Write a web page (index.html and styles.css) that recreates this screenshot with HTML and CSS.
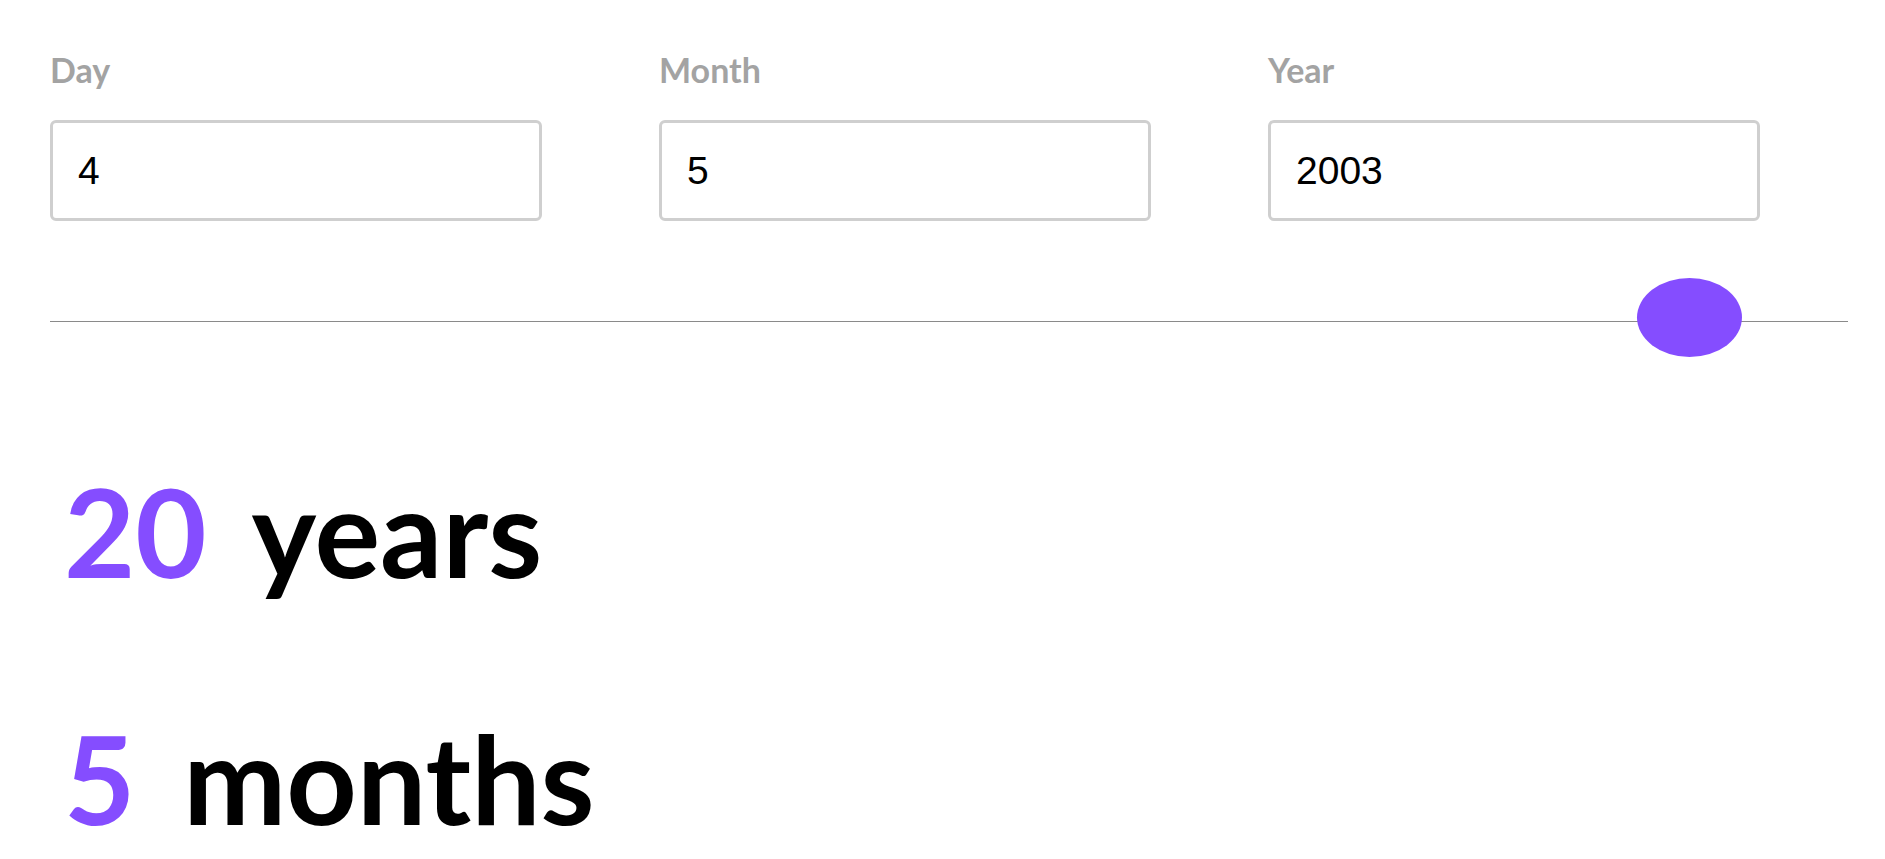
FILE: index.html
```html
<!DOCTYPE html>
<html lang="en">
<head>
<meta charset="utf-8">
<title>Age calculator</title>
<link rel="stylesheet" href="styles.css">
</head>
<body>
<main class="app">
  <form class="fields">
    <label class="field">
      <span class="field-label">Day</span>
      <input class="field-input" type="text" value="4">
    </label>
    <label class="field">
      <span class="field-label">Month</span>
      <input class="field-input" type="text" value="5">
    </label>
    <label class="field">
      <span class="field-label">Year</span>
      <input class="field-input" type="text" value="2003">
    </label>
  </form>
  <div class="divider">
    <button class="submit" type="button" aria-label="Calculate"></button>
  </div>
  <section class="results">
    <p class="result"><span class="num">20</span> years</p>
    <p class="result"><span class="num">5</span> months</p>
  </section>
</main>
</body>
</html>
```

FILE: styles.css
```css
html, body {
  margin: 0;
  padding: 0;
  background: #ffffff;
}

body {
  font-family: "Comic Sans MS", "Lato", sans-serif;
  overflow: hidden;
}

.app {
  padding: 50px 37px 0 50px;
}

.fields {
  display: flex;
  gap: 117px;
  margin: 0;
}

.field {
  display: flex;
  flex-direction: column;
  width: 492px;
}

.field-label {
  font-size: 34px;
  line-height: 40px;
  font-weight: 700;
  color: #a3a3a3;
  margin-bottom: 30px;
}

.field-input {
  box-sizing: border-box;
  width: 492px;
  height: 101px;
  border: 3px solid #cfcfcf;
  border-radius: 6px;
  padding: 0 25px;
  font-family: "Liberation Sans", Arial, sans-serif;
  font-size: 39px;
  color: #000;
  background: #fff;
  outline: none;
}

.divider {
  position: relative;
  margin-top: 100px;
  height: 1px;
  background: #8a8a8a;
}

.submit {
  position: absolute;
  top: -43px;
  right: 106px;
  width: 105px;
  height: 79px;
  border: none;
  padding: 0;
  border-radius: 50%;
  background: #854dff;
}

.results {
  margin-top: 135px;
}

.result {
  margin: 0 0 99px 0;
  font-size: 123px;
  line-height: 1.2;
  font-weight: 700;
  color: #000;
  padding-left: 14px;
  word-spacing: 18px;
}

.num {
  color: #854dff;
}
```
